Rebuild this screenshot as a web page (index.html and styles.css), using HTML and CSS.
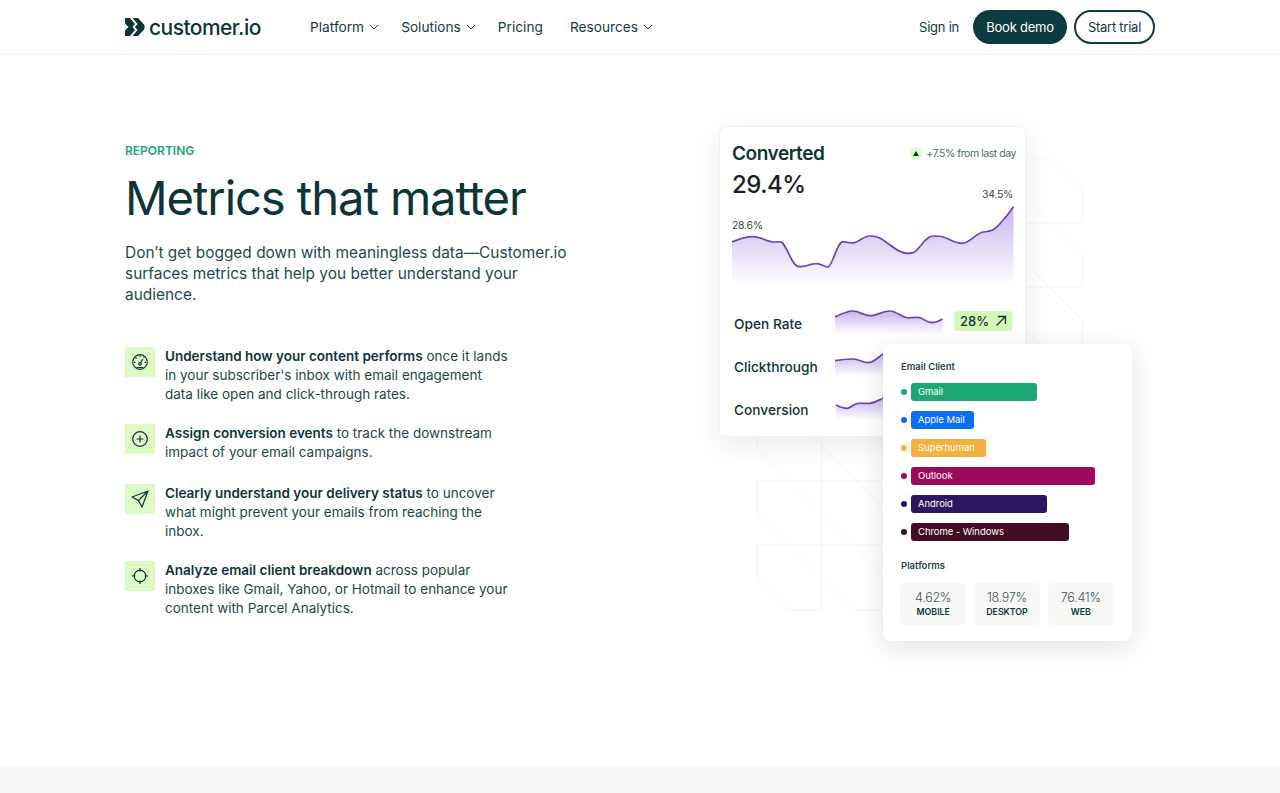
FILE: index.html
```html
<!DOCTYPE html>
<html lang="en">
<head>
    <meta charset="UTF-8">
    <meta name="viewport" content="width=device-width, initial-scale=1.0">
    <title>Reporting - Customer.io</title>
    <link rel="stylesheet" href="styles.css">
</head>
<body>
    <header class="topbar">
        <div class="topbar-inner">
            <a class="logo" href="#">
                <svg class="logo-mark" width="20" height="20" viewBox="0 0 20 20">
                    <path d="M0 1H5L10 7L7.500 10L10 13L5 19H0V13.500L3.500 10L0 6.500Z"/>
                    <path d="M7.500 1H13L19.500 8V12L13 19H7.500L12.500 13L10 10L12.500 7Z"/>
                </svg>
                <span>customer.io</span>
            </a>
            <nav class="menu">
                <a class="menu-item" href="#">Platform <svg class="caret" width="10" height="6" viewBox="0 0 10 6"><path d="M1 1l4 4 4-4"/></svg></a>
                <a class="menu-item" href="#">Solutions <svg class="caret" width="10" height="6" viewBox="0 0 10 6"><path d="M1 1l4 4 4-4"/></svg></a>
                <a class="menu-item menu-plain" href="#">Pricing</a>
                <a class="menu-item" href="#">Resources <svg class="caret" width="10" height="6" viewBox="0 0 10 6"><path d="M1 1l4 4 4-4"/></svg></a>
            </nav>
            <div class="actions">
                <a class="signin" href="#">Sign in</a>
                <a class="btn btn-dark" href="#">Book demo</a>
                <a class="btn btn-outline" href="#">Start trial</a>
            </div>
        </div>
    </header>

    <main class="hero">
        <section class="copy">
            <p class="eyebrow">REPORTING</p>
            <h1>Metrics that matter</h1>
            <p class="lead">Don’t get bogged down with meaningless data—Customer.io surfaces metrics that help you better understand your audience.</p>
            <ul class="features">
                <li class="feature">
                    <span class="feature-icon">
                        <svg width="18" height="18" viewBox="0 0 18 18"><circle cx="9" cy="9" r="7.300"/><path d="M9 10.500L12 6M4.500 9.500H3M15 9.500H13.500M5.500 5.500L4.500 4.500M12.500 4.500L13.500 3.500M9 4V2.500M5.500 14.500H12.500"/><circle cx="9" cy="10.800" r="1.300"/></svg>
                    </span>
                    <p><b>Understand how your content performs</b> once it lands in your subscriber's inbox with email engagement data like open and click-through rates.</p>
                </li>
                <li class="feature">
                    <span class="feature-icon">
                        <svg width="18" height="18" viewBox="0 0 18 18"><circle cx="9" cy="9" r="7.300"/><path d="M9 5.500V12.500M5.500 9H12.500"/></svg>
                    </span>
                    <p><b>Assign conversion events</b> to track the downstream impact of your email campaigns.</p>
                </li>
                <li class="feature">
                    <span class="feature-icon">
                        <svg width="18" height="18" viewBox="0 0 18 18"><path d="M17 1L1 7L7.500 10.500L11 17ZM7.500 10.500L17 1"/></svg>
                    </span>
                    <p><b>Clearly understand your delivery status</b> to uncover what might prevent your emails from reaching the inbox.</p>
                </li>
                <li class="feature">
                    <span class="feature-icon">
                        <svg width="18" height="18" viewBox="0 0 18 18"><circle cx="9" cy="9" r="5.800"/><path d="M9 1V4.500M9 13.500V17M1 9H4.500M13.500 9H17"/></svg>
                    </span>
                    <p><b>Analyze email client breakdown</b> across popular inboxes like Gmail, Yahoo, or Hotmail to enhance your content with Parcel Analytics.</p>
                </li>
            </ul>
        </section>

        <section class="visual">
            <svg class="pattern" width="400" height="470" viewBox="0 0 400 470">
                <path d="M308 0H331L363 32V65H308M308 42L363 97V129H308M308 107L363 162V187M308 174L350 216"/>
                <path d="M38 279V290L71 323L103 355L163 415M93 279L163 349M38 323H163M38 387H163M103 279V452M38 323V355L71 387L136 452H163M38 387V419L71 452H103"/>
            </svg>

            <article class="card card-main">
                <div class="card-head">
                    <h2>Converted</h2>
                    <p class="delta"><span class="delta-dot"></span>+7.5% from last day</p>
                </div>
                <p class="big-number">29.4%</p>
                <div class="chart">
                    <span class="chart-label label-start">28.6%</span>
                    <span class="chart-label label-end">34.5%</span>
                    <svg width="282" height="80" viewBox="0 0 282 80">
                        <defs>
                            <linearGradient id="fade" x1="0" y1="0" x2="0" y2="1">
                                <stop offset="0" stop-color="#7b4fd0" stop-opacity=".42"/>
                                <stop offset="1" stop-color="#7b4fd0" stop-opacity="0"/>
                            </linearGradient>
                        </defs>
                        <path fill="url(#fade)" d="M0 37C7 34 14 31.700 21 31.700C29 31.700 35 37 42 37C46 37 48 36 50 37.500C56 43 60 61.700 67 61.700C73 61.700 79 58.700 85 58.700C89 58.700 92 62 96 62C101 60 105 37 111 36.700C114 36.700 116 38 120 38C126 38 131 31 138 31C143 31 147 32 151 35C160 41 167 48.300 175 48.300C178 48.300 181 48 183 46.700C189 42 194 31 201 31C205 31 208 31 211 32C218 34 223 38.300 230 38.300C238 38.300 244 28 251 27C255 26.500 257 26.500 260 25.300C265 23 268 19 271 15C275 11 278 6 281.500 1.700V80H0Z"/>
                        <path class="line" d="M0 37C7 34 14 31.700 21 31.700C29 31.700 35 37 42 37C46 37 48 36 50 37.500C56 43 60 61.700 67 61.700C73 61.700 79 58.700 85 58.700C89 58.700 92 62 96 62C101 60 105 37 111 36.700C114 36.700 116 38 120 38C126 38 131 31 138 31C143 31 147 32 151 35C160 41 167 48.300 175 48.300C178 48.300 181 48 183 46.700C189 42 194 31 201 31C205 31 208 31 211 32C218 34 223 38.300 230 38.300C238 38.300 244 28 251 27C255 26.500 257 26.500 260 25.300C265 23 268 19 271 15C275 11 278 6 281.500 1.700"/>
                    </svg>
                </div>
                <div class="rate-row">
                    <span class="rate-name">Open Rate</span>
                    <svg class="spark" width="108" height="26" viewBox="0 0 108 26">
                        <path fill="url(#fade)" d="M0 9C6 6 12 3 18 3C24 3 29 7.700 35 7.700C42 7.700 48 3 55 3C61 3 66 9 72 9.700C76 10 81 9 85 9.700C89 11 92 14.700 97 14.700C100 14.700 104 13 107.500 11V26H0Z"/>
                        <path class="line" d="M0 9C6 6 12 3 18 3C24 3 29 7.700 35 7.700C42 7.700 48 3 55 3C61 3 66 9 72 9.700C76 10 81 9 85 9.700C89 11 92 14.700 97 14.700C100 14.700 104 13 107.500 11"/>
                    </svg>
                    <span class="rate-badge">28%
                        <svg width="12" height="12" viewBox="0 0 12 12"><path d="M1.500 10.500L10.500 1.500M3 1.500H10.500V9"/></svg>
                    </span>
                </div>
                <div class="rate-row">
                    <span class="rate-name">Clickthrough</span>
                    <svg class="spark" width="108" height="26" viewBox="0 0 108 26">
                        <path fill="url(#fade)" d="M0 9.700C6 8.500 12 8 18 8C24 8 28 11.700 33 11.700C39 11.700 43 6 48 3C56 0 70 6 107 6V26H0Z"/>
                        <path class="line" d="M0 9.700C6 8.500 12 8 18 8C24 8 28 11.700 33 11.700C39 11.700 43 6 48 3C56 0 70 6 107 6"/>
                    </svg>
                </div>
                <div class="rate-row">
                    <span class="rate-name">Conversion</span>
                    <svg class="spark" width="108" height="26" viewBox="0 0 108 26">
                        <path fill="url(#fade)" d="M1 11C5 13 8 14.300 12 14.300C16 14.300 19 9.300 23 9.300C28 9 31 9.800 35 9.300C40 8.700 44 6 48 4.300C60 0 80 6 107 6V26H1Z"/>
                        <path class="line" d="M1 11C5 13 8 14.300 12 14.300C16 14.300 19 9.300 23 9.300C28 9 31 9.800 35 9.300C40 8.700 44 6 48 4.300C60 0 80 6 107 6"/>
                    </svg>
                </div>
            </article>

            <article class="card card-clients">
                <h3>Email Client</h3>
                <ul class="clients">
                    <li class="client client-gmail"><span class="dot"></span><span class="bar">Gmail</span></li>
                    <li class="client client-apple"><span class="dot"></span><span class="bar">Apple Mail</span></li>
                    <li class="client client-super"><span class="dot"></span><span class="bar">Superhuman</span></li>
                    <li class="client client-outlook"><span class="dot"></span><span class="bar">Outlook</span></li>
                    <li class="client client-android"><span class="dot"></span><span class="bar">Android</span></li>
                    <li class="client client-chrome"><span class="dot"></span><span class="bar">Chrome - Windows</span></li>
                </ul>
                <h3 class="platforms-title">Platforms</h3>
                <div class="platforms">
                    <div class="platform"><span class="platform-value">4.62%</span><span class="platform-name">MOBILE</span></div>
                    <div class="platform"><span class="platform-value">18.97%</span><span class="platform-name">DESKTOP</span></div>
                    <div class="platform"><span class="platform-value">76.41%</span><span class="platform-name">WEB</span></div>
                </div>
            </article>
        </section>
    </main>

    <div class="next-band"></div>
</body>
</html>
```

FILE: styles.css
```css
* {
    box-sizing: border-box;
}
body {
    margin: 0;
    height: 793px;
    overflow: hidden;
    font-family: Inter, "Liberation Sans", sans-serif;
    color: #0f3a3d;
    background-color: #fff;
}
a {
    color: inherit;
    text-decoration: none;
}
p, h1, h2, h3, ul {
    margin: 0;
    padding: 0;
}
ul {
    list-style: none;
}

.topbar {
    height: 55px;
    border-bottom: 1px solid #f2f2f1;
}
.topbar-inner {
    width: 1030px;
    height: 54px;
    margin: 0 auto;
    display: flex;
    align-items: center;
}
.logo {
    display: flex;
    align-items: center;
    gap: 4px;
    width: 185px;
    font-size: 21px;
    font-weight: 500;
    letter-spacing: -0.550px;
    color: #0d3538;
}
.logo-mark {
    fill: #0d3538;
}
.menu {
    display: flex;
    align-items: center;
    gap: 22px;
    font-size: 13.700px;
    color: #143d40;
}
.menu-item {
    display: flex;
    align-items: center;
    gap: 5px;
}
.menu-plain {
    margin-right: 5px;
}
.caret {
    fill: none;
    stroke: #143d40;
    stroke-width: 1;
}
.actions {
    margin-left: auto;
    display: flex;
    align-items: center;
    font-size: 13px;
    letter-spacing: -0.250px;
}
.signin {
    margin-right: 14px;
}
.btn {
    display: flex;
    align-items: center;
    justify-content: center;
    height: 34px;
    border-radius: 17px;
}
.btn-dark {
    width: 94px;
    margin-right: 7px;
    background-color: #0d3b40;
    color: #fff;
}
.btn-outline {
    width: 81px;
    border: 2px solid #0d3b40;
}

.hero {
    width: 1030px;
    margin: 0 auto;
    height: 711px;
    display: flex;
    position: relative;
}
.copy {
    width: 445px;
    padding-top: 88px;
}
.eyebrow {
    font-size: 12px;
    line-height: 15px;
    font-weight: 600;
    color: #1aa675;
}
h1 {
    margin-top: 12px;
    font-size: 47.200px;
    line-height: 56px;
    font-weight: 400;
    letter-spacing: -1.100px;
    color: #0d3538;
}
.lead {
    margin-top: 16px;
    font-size: 15.450px;
    line-height: 21px;
    color: #24494c;
}
.features {
    margin-top: 42px;
    display: flex;
    flex-direction: column;
    gap: 20px;
}
.feature {
    display: flex;
    gap: 10px;
    min-height: 40px;
    font-size: 13.500px;
    line-height: 19px;
    color: #1f4548;
}
.feature p {
    width: 346px;
}
.feature b {
    font-weight: 600;
    color: #0d3538;
}
.feature-icon {
    flex: none;
    width: 30px;
    height: 30px;
    display: flex;
    align-items: center;
    justify-content: center;
    background-color: #defbc6;
}
.feature-icon svg {
    fill: none;
    stroke: #0d3538;
    stroke-width: 1.200;
    stroke-linejoin: round;
}

.visual {
    flex: 1;
    position: relative;
}
.pattern {
    position: absolute;
    left: 149px;
    top: 103px;
    fill: none;
    stroke: #f1f3f2;
    stroke-width: 1;
}
.card {
    position: absolute;
    background-color: #fff;
    border-radius: 8px;
}
.card-main {
    left: 149px;
    top: 71px;
    width: 307px;
    height: 311px;
    padding: 15px 12px 0;
    border: 1px solid #f1f1f0;
    box-shadow: 0 8px 28px rgba(20, 30, 30, 0.09);
}
.card-head {
    display: flex;
    align-items: center;
    justify-content: space-between;
    margin-right: -3px;
}
h2 {
    font-size: 19px;
    line-height: 24px;
    font-weight: 600;
    letter-spacing: -0.450px;
    color: #0d3538;
}
.delta {
    display: flex;
    align-items: center;
    gap: 4px;
    margin-top: -1px;
    font-size: 10.500px;
    letter-spacing: -0.450px;
    color: #4d6a6b;
}
.delta-dot {
    width: 12px;
    height: 12px;
    display: flex;
    align-items: center;
    justify-content: center;
    border-radius: 50%;
    background-color: #defbc6;
}
.delta-dot::after {
    content: "";
    border-left: 3px solid transparent;
    border-right: 3px solid transparent;
    border-bottom: 5px solid #0d3538;
}
.big-number {
    margin-top: 3px;
    font-size: 24px;
    line-height: 32px;
    font-weight: 500;
    letter-spacing: -0.500px;
    color: #1c1f20;
}
.chart {
    position: relative;
    margin-top: 4px;
    height: 80px;
    width: 282px;
    margin-bottom: 23px;
}
.chart svg {
    display: block;
}
.chart-label {
    position: absolute;
    font-size: 10.500px;
    letter-spacing: -0.300px;
    color: #3d4243;
}
.label-start {
    left: 0;
    top: 14px;
}
.label-end {
    right: 1px;
    top: -17px;
}
.line {
    fill: none;
    stroke: #6a43bd;
    stroke-width: 1.700;
}
.rate-row {
    display: flex;
    align-items: flex-start;
    height: 43px;
    padding-left: 2px;
}
.rate-name {
    width: 101px;
    padding-top: 7px;
    font-size: 13.700px;
    line-height: 18px;
    font-weight: 500;
    color: #0d3538;
}
.spark {
    flex: none;
}
.rate-badge {
    display: flex;
    align-items: center;
    gap: 6px;
    width: 58px;
    height: 20px;
    margin: 3px 0 0 11px;
    padding-left: 6px;
    border-radius: 2px;
    background-color: #d4f9b6;
    font-size: 13px;
    font-weight: 500;
}
.rate-badge svg {
    fill: none;
    stroke: #0d3538;
    stroke-width: 1.300;
}

.card-clients {
    left: 313px;
    top: 289px;
    width: 249px;
    height: 297px;
    padding: 17px 18px 0;
    box-shadow: 0 6px 26px rgba(20, 30, 30, 0.13);
}
h3 {
    font-size: 9.500px;
    line-height: 12px;
    font-weight: 600;
    color: #1f4548;
}
.clients {
    margin-top: 10px;
    display: flex;
    flex-direction: column;
    gap: 10px;
}
.client {
    display: flex;
    align-items: center;
    gap: 4px;
}
.dot {
    width: 6px;
    height: 6px;
    border-radius: 50%;
}
.bar {
    height: 18px;
    padding-left: 7px;
    border-radius: 3px;
    font-size: 9.500px;
    letter-spacing: -0.050px;
    line-height: 18px;
    color: #fff;
}
.client-gmail .dot, .client-gmail .bar {
    background-color: #1da672;
}
.client-gmail .bar {
    width: 126px;
}
.client-apple .dot, .client-apple .bar {
    background-color: #0a6ef5;
}
.client-apple .bar {
    width: 63px;
}
.client-super .dot, .client-super .bar {
    background-color: #f4b13f;
}
.client-super .bar {
    width: 75px;
}
.client-outlook .dot, .client-outlook .bar {
    background-color: #9b0b5d;
}
.client-outlook .bar {
    width: 184px;
}
.client-android .dot, .client-android .bar {
    background-color: #2c1760;
}
.client-android .bar {
    width: 136px;
}
.client-chrome .dot, .client-chrome .bar {
    background-color: #420c22;
}
.client-chrome .bar {
    width: 158px;
}
.platforms-title {
    margin-top: 19px;
}
.platforms {
    margin-top: 11px;
    margin-left: -1px;
    display: flex;
    gap: 7.500px;
}
.platform {
    width: 67px;
    height: 42px;
    display: flex;
    flex-direction: column;
    align-items: center;
    justify-content: center;
    border-radius: 4px;
    background-color: #f8f8f7;
}
.platform-value {
    font-size: 12.500px;
    line-height: 16px;
    font-weight: 300;
    letter-spacing: -0.250px;
    color: #3f5557;
}
.platform-name {
    font-size: 8.800px;
    line-height: 12px;
    font-weight: 600;
    color: #0d3538;
}

.next-band {
    height: 27px;
    background-color: #f9f7f6;
}
```
